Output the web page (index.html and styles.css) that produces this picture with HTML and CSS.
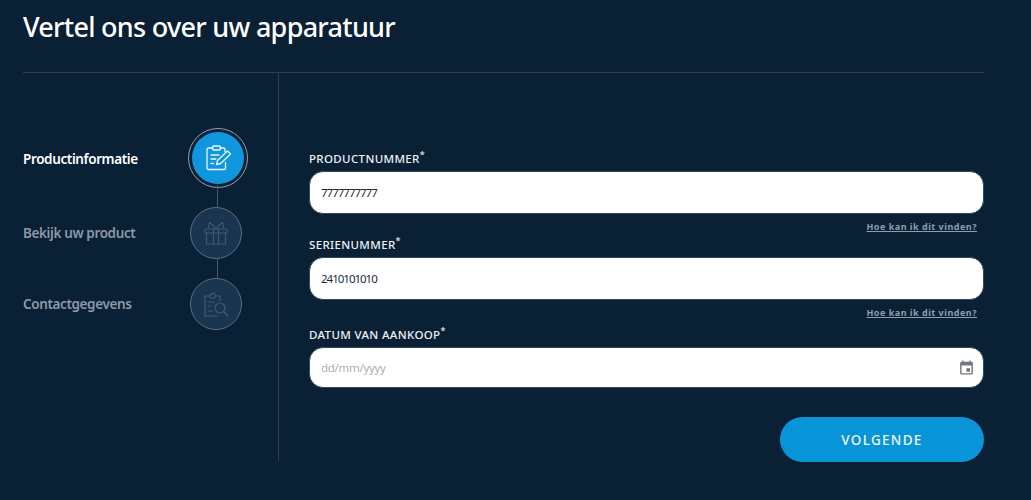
FILE: index.html
```html
<!DOCTYPE html>
<html lang="nl">
<head>
<meta charset="utf-8">
<title>Vertel ons over uw apparatuur</title>
<link rel="stylesheet" href="styles.css">
</head>
<body>
<div class="page">
  <header class="header"><h1>Vertel ons over uw apparatuur</h1></header>
  <main class="main">
    <nav class="steps">
      <div class="step active">
        <span class="step-label">Productinformatie</span>
        <span class="ring"><span class="circle">
          <svg viewBox="0 0 28 28" class="icon" fill="none" stroke="currentColor" stroke-width="1.300" stroke-linecap="round" stroke-linejoin="round">
            <path d="M9 4H4.500A1.500 1.500 0 0 0 3 5.500V24a1.500 1.500 0 0 0 1.500 1.500H20a1.500 1.500 0 0 0 1.500-1.500v-5.500"/>
            <path d="M16 4h3.500A1.500 1.500 0 0 1 21 5.500V8"/>
            <rect x="8.500" y="2" width="8" height="4" rx="1.200"/>
            <path d="M7 11h8M7 15h5M7 19.500h2.500"/>
            <path d="M12.500 20.500l1-4L23.500 7l3 3-9.800 9.500z"/>
          </svg>
        </span></span>
      </div>
      <div class="connector first"></div>
      <div class="step">
        <span class="step-label">Bekijk uw product</span>
        <span class="circle muted">
          <svg viewBox="0 0 28 28" class="icon" fill="none" stroke="currentColor" stroke-width="1.200" stroke-linejoin="round">
            <path d="M3 10h22v4H3zM4.500 14v11h19V14M11.500 10v15M16.500 10v15"/>
            <path d="M14 10C12 7 9.500 4.500 7.500 3.500L6.500 9.500M14 10c2-3 4.500-5.500 6.500-6.500l1 6"/>
          </svg>
        </span>
      </div>
      <div class="connector"></div>
      <div class="step">
        <span class="step-label">Contactgegevens</span>
        <span class="circle muted">
          <svg viewBox="0 0 28 28" class="icon" fill="none" stroke="currentColor" stroke-width="1.200" stroke-linecap="round" stroke-linejoin="round">
            <path d="M8 6H3v20h12M18 11V6h-5"/>
            <path d="M8 6V4.500h1.500a1.500 1.500 0 0 1 3 0H13V8H8z"/>
            <path d="M6 12h6M6 16h3M6 21h4"/>
            <circle cx="18" cy="18" r="5"/>
            <path d="M22 22l4 4"/>
          </svg>
        </span>
      </div>
    </nav>
    <form class="form">
      <div class="field">
        <label class="label" for="pn">PRODUCTNUMMER<sup>*</sup></label>
        <input class="input" id="pn" type="text" value="7777777777">
        <a class="help" href="#">Hoe kan ik dit vinden?</a>
      </div>
      <div class="field wide">
        <label class="label" for="sn">SERIENUMMER<sup>*</sup></label>
        <input class="input" id="sn" type="text" value="2410101010">
        <a class="help" href="#">Hoe kan ik dit vinden?</a>
      </div>
      <div class="field wide">
        <label class="label" for="dt">DATUM VAN AANKOOP<sup>*</sup></label>
        <div class="date-wrap">
          <input class="input short" id="dt" type="text" placeholder="dd/mm/yyyy">
          <svg class="cal" viewBox="0 0 24 24" fill="#6f7780"><path d="M19 4h-1V2h-2v2H8V2H6v2H5a2 2 0 0 0-2 2v14a2 2 0 0 0 2 2h14a2 2 0 0 0 2-2V6a2 2 0 0 0-2-2zm0 16H5V9h14v11zm-7-7h5v5h-5z" /></svg>
        </div>
      </div>
      <div class="actions"><button class="next" type="button">VOLGENDE</button></div>
    </form>
  </main>
</div>
</body>
</html>
```
FILE: styles.css
```css
* { box-sizing: border-box; }
html, body { margin: 0; height: 100%; }
body {
  background: #0a2035;
  font-family: "Noto Sans", "Open Sans", sans-serif;
  color: #fff;
  overflow: hidden;
}
.page { width: 961px; margin-left: 23px; }
.header {
  height: 73px;
  border-bottom: 1px solid #2b3f52;
  padding-top: 9px;
}
.header h1 {
  margin: 0;
  font-size: 27px;
  line-height: 36px;
  font-weight: 500;
  letter-spacing: -0.72px;
}
.main { display: flex; height: 388px; }
.steps {
  width: 256px;
  border-right: 1px solid #2b3f52;
  padding-top: 60px;
  padding-right: 36px;
  display: flex;
  flex-direction: column;
}
.step {
  display: flex;
  align-items: center;
  justify-content: space-between;
  height: 52px;
}
.step-label {
  font-size: 13.500px;
  font-weight: 600;
  color: #8c99a6;
  letter-spacing: -0.38px;
}
.active .step-label { color: #fff; }
.circle {
  width: 52px;
  height: 52px;
  border-radius: 50%;
  border: 1px solid #56708a;
  background: #1a3550;
  display: flex;
  align-items: center;
  justify-content: center;
  flex: none;
}
.circle.muted { color: #3d5a76; }
.ring {
  width: 60px;
  height: 60px;
  margin: 0 -6px 2px 0;
  border-radius: 50%;
  border: 1px solid #8fa1b2;
  display: flex;
  align-items: center;
  justify-content: center;
  flex: none;
}
.ring .circle { background: #1096dc; border: 0; color: #e8f6ff; }
.icon { width: 28px; height: 28px; }
.connector {
  width: 1px;
  height: 19px;
  background: #43596e;
  align-self: flex-end;
  margin-right: 24px;
}
.connector.first { height: 22px; }
.form {
  flex: 1;
  padding: 78px 0 0 30px;
  display: flex;
  flex-direction: column;
}
.field { display: flex; flex-direction: column; flex: none; height: 86px; }
.field.wide { height: 90px; }
.label {
  font-size: 11.500px;
  line-height: 16px;
  font-weight: 500;
  letter-spacing: 0.35px;
  height: 20px;
  color: #eef2f5;
}
.label sup { font-size: 9px; line-height: 0; letter-spacing: 0; }
.input {
  width: 100%;
  height: 43px;
  flex: none;
  border: 1px solid #33495e;
  border-radius: 14px;
  background: #fff;
  padding: 0 11px;
  font: 400 11.500px "Noto Sans", sans-serif;
  letter-spacing: -1px;
  color: #1c2b3a;
  outline: none;
}
.input.short { height: 41px; }
.input::placeholder { color: #aab0b6; letter-spacing: -0.3px; }
.help {
  align-self: flex-end;
  margin: 7px 7px 0 0;
  font-size: 9px;
  line-height: 12px;
  font-weight: 700;
  letter-spacing: 0.5px;
  color: #8f9eac;
}
.date-wrap { position: relative; }
.cal { position: absolute; right: 9px; top: 12px; width: 17px; height: 17px; }
.actions { display: flex; justify-content: flex-end; flex: none; }
.next {
  width: 204px;
  height: 45px;
  border: 0;
  border-radius: 23px;
  background: #0a94d8;
  color: #eaf7ff;
  font: 500 13.500px "Noto Sans", sans-serif;
  letter-spacing: 1.3px;
}
```
